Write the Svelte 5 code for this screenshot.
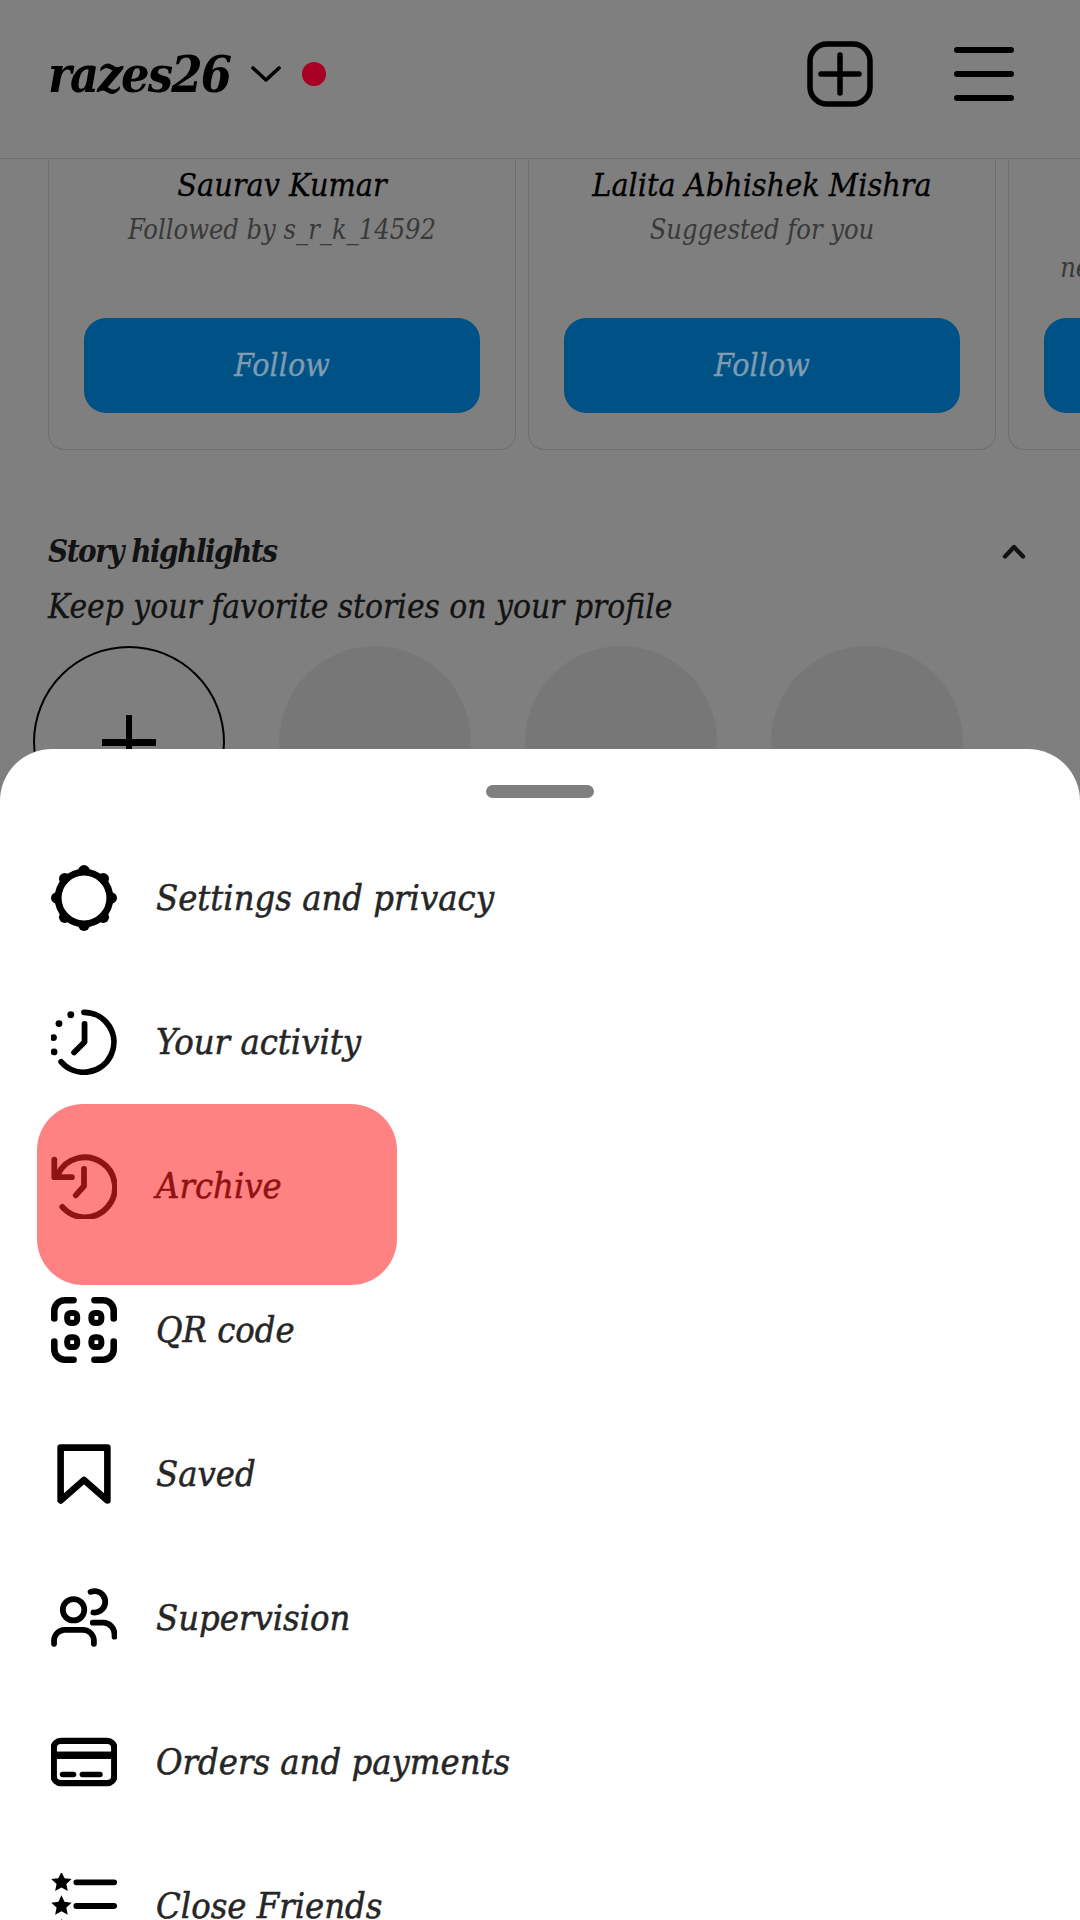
<script lang="ts">
  const cards = [
    { name: 'Saurav Kumar', note: 'Followed by s_r_k_14592' },
    { name: 'Lalita Abhishek Mishra', note: 'Suggested for you' },
    { name: 'Ankit Raj', note: 'Instagram\nnew to Instagram and nearby' }
  ]

  const menu = [
    { id: 'settings', label: 'Settings and privacy' },
    { id: 'activity', label: 'Your activity' },
    { id: 'archive', label: 'Archive' },
    { id: 'qr', label: 'QR code' },
    { id: 'saved', label: 'Saved' },
    { id: 'supervision', label: 'Supervision' },
    { id: 'orders', label: 'Orders and payments' },
    { id: 'friends', label: 'Close Friends' }
  ]

  const bumps = [0, 45, 90, 135, 180, 225, 270, 315].map((deg) => ({
    x: 12 + 9.9 * Math.cos((deg * Math.PI) / 180),
    y: 12 + 9.9 * Math.sin((deg * Math.PI) / 180)
  }))

  const star = (cx: number, cy: number, r = 3.9) => {
    const pts = []
    for (let i = 0; i < 10; i++) {
      const rad = i % 2 ? r * 0.48 : r
      const a = (i * Math.PI) / 5 - Math.PI / 2
      pts.push(`${(cx + rad * Math.cos(a)).toFixed(2)},${(cy + rad * Math.sin(a)).toFixed(2)}`)
    }
    return pts.join(' ')
  }
</script>

<div class="screen">
  <header class="topbar">
    <div class="account">
      <span class="username">razes26</span>
      <svg class="caret" viewBox="0 0 32 20" fill="none" stroke="currentColor" stroke-width="3.6" stroke-linecap="round" stroke-linejoin="round">
        <path d="M3 4 L16 16 L29 4" />
      </svg>
      <span class="dot"></span>
    </div>
    <div class="actions">
      <svg class="new-post" viewBox="0 0 66 66" fill="none" stroke="currentColor" stroke-width="5.5" stroke-linecap="round">
        <rect x="3" y="3" width="60" height="60" rx="17" />
        <path d="M33 14 V52 M14 33 H52" />
      </svg>
      <svg class="burger" viewBox="0 0 60 54" fill="none" stroke="currentColor" stroke-width="6" stroke-linecap="round">
        <path d="M3 3 H57 M3 27 H57 M3 51 H57" />
      </svg>
    </div>
  </header>

  <div class="suggestions">
    {#each cards as card}
      <div class="card">
        <div class="card-name">{card.name}</div>
        <div class="card-note">{card.note}</div>
        <div class="follow">Follow</div>
      </div>
    {/each}
  </div>

  <section class="highlights">
    <div class="hl-title">
      <span>Story highlights</span>
      <svg class="hl-caret" viewBox="0 0 24 15" fill="none" stroke="currentColor" stroke-width="4.4" stroke-linecap="round" stroke-linejoin="round">
        <path d="M3 12.5 L12 3 L21 12.5" />
      </svg>
    </div>
    <div class="hl-sub">Keep your favorite stories on your profile</div>
    <div class="circles">
      <div class="circle add"></div>
      <div class="circle"></div>
      <div class="circle"></div>
      <div class="circle"></div>
    </div>
  </section>

  <div class="scrim"></div>

  <div class="sheet">
    <div class="handle"></div>
    <ul class="menu">
      {#each menu as item}
        <li class="row" class:marked={item.id === 'archive'}>
          <svg class="icon" viewBox="0 0 24 24" fill="none" stroke="currentColor" stroke-width="2.1" stroke-linecap="round" stroke-linejoin="round">
            {#if item.id === 'settings'}
              {#each bumps as b}
                <circle cx={b.x} cy={b.y} r="2.1" fill="currentColor" stroke="none" />
              {/each}
              <circle cx="12" cy="12" r="9.4" fill="#fff" stroke-width="2.5" />
            {:else if item.id === 'activity'}
              <path d="M12 1.2 A10.9 10.9 0 1 1 3.7 19.2" />
              <path d="M12.2 5.4 V12 L8.4 15.8" />
              <g fill="currentColor" stroke="none">
                <circle cx="7.2" cy="2.1" r="1.25" />
                <circle cx="2.9" cy="5.3" r="1.25" />
                <circle cx="0.9" cy="10.4" r="1.25" />
                <circle cx="1.1" cy="15.6" r="1.25" />
              </g>
            {:else if item.id === 'archive'}
              <path d="M2.6 7.6 A10.9 10.9 0 1 1 4.1 19.6" />
              <path d="M1.2 2.4 V8.8 H7.6" />
              <path d="M12 5.8 V12 L9 15.4" />
            {:else if item.id === 'qr'}
              <path d="M1.2 7.8 V5 A3.8 3.8 0 0 1 5 1.2 H8.2" stroke-width="2.4" />
              <path d="M15.8 1.2 H19 A3.8 3.8 0 0 1 22.8 5 V7.8" stroke-width="2.4" />
              <path d="M1.2 16.2 V19 A3.8 3.8 0 0 0 5 22.8 H8.2" stroke-width="2.4" />
              <path d="M15.8 22.8 H19 A3.8 3.8 0 0 0 22.8 19 V16.2" stroke-width="2.4" />
              <g stroke-width="2.2">
                <rect x="5.9" y="5.8" width="3.6" height="3.6" rx="1.3" />
                <rect x="14.7" y="5.8" width="3.6" height="3.6" rx="1.3" />
                <rect x="5.9" y="14.6" width="3.6" height="3.6" rx="1.3" />
                <rect x="14.7" y="14.6" width="3.6" height="3.6" rx="1.3" />
              </g>
            {:else if item.id === 'saved'}
              <path d="M3.5 2.4 H20.5 V21.6 L12 14.2 L3.5 21.6 Z" stroke-width="2.4" />
            {:else if item.id === 'supervision'}
              <circle cx="8.2" cy="9" r="3.9" />
              <path d="M1.1 21.4 V20.2 A4 4 0 0 1 5 16.3 H11.6 A4 4 0 0 1 15.6 20.2 V21.4" />
              <path d="M14.4 2.5 A3.9 3.9 0 1 1 15.4 10" />
              <path d="M15.2 13.7 H19 A4.2 4.2 0 0 1 23.1 18 V18.8" />
            {:else if item.id === 'orders'}
              <rect x="1" y="4.3" width="22" height="15.4" rx="2.6" stroke-width="2.3" />
              <rect x="1" y="8.2" width="22" height="2.7" fill="currentColor" stroke="none" />
              <path d="M4.2 16.5 H8.2 M11.4 16.5 H17.8" stroke-width="2" />
            {:else if item.id === 'friends'}
              <g fill="currentColor" stroke="none">
                <polygon points={star(3.8, 3.4)} />
                <polygon points={star(3.8, 12)} />
                <polygon points={star(3.8, 20.6)} />
              </g>
              <path d="M9.2 3.4 H23 M9.2 12 H23 M9.2 20.6 H23" />
            {/if}
          </svg>
          <span class="label">{item.label}</span>
        </li>
      {/each}
    </ul>
    <div class="mark"></div>
  </div>
</div>

<style>
  :global(body) {
    margin: 0;
  }

  .screen {
    position: relative;
    width: 1080px;
    height: 1920px;
    overflow: hidden;
    background: #fff;
    color: #000;
    font-family: 'DejaVu Serif', 'Liberation Serif', serif;
    font-style: italic;
    font-stretch: condensed;
  }

  /* top bar */
  .topbar {
    display: flex;
    align-items: center;
    justify-content: space-between;
    box-sizing: border-box;
    height: 159px;
    padding: 0 66px 10px 48px;
    border-bottom: 1px solid #e0e0e0;
  }

  .account {
    display: flex;
    align-items: center;
  }

  .username {
    font-size: 50px;
    font-weight: 700;
    letter-spacing: -1.8px;
  }

  .caret {
    width: 32px;
    height: 20px;
    margin-left: 20px;
  }

  .dot {
    position: relative;
    z-index: 1;
    width: 24px;
    height: 24px;
    margin-left: 20px;
    border-radius: 50%;
    background: #a80024;
  }

  .actions {
    display: flex;
    align-items: center;
    gap: 81px;
  }

  .new-post {
    width: 66px;
    height: 66px;
  }

  .burger {
    width: 60px;
    height: 54px;
  }

  /* suggestion cards */
  .suggestions {
    display: flex;
    gap: 12px;
    padding-left: 48px;
    width: 1500px;
  }

  .card {
    box-sizing: border-box;
    width: 468px;
    height: 291px;
    flex: none;
    padding: 5px 35px 0;
    border: 1px solid #dbdbdb;
    border-top: none;
    border-radius: 0 0 16px 16px;
    text-align: center;
    display: flex;
    flex-direction: column;
  }

  .card-name {
    font-size: 32px;
    line-height: 42px;
    -webkit-text-stroke: 0.3px;
  }

  .card-note {
    height: 108px;
    margin-top: 5px;
    margin-bottom: -1px;
    font-size: 27px;
    line-height: 38px;
    color: #737373;
    white-space: pre-line;
  }

  .follow {
    position: relative;
    z-index: 1;
    height: 95px;
    border-radius: 22px;
    background: #005286;
    color: #7f9bb0;
    font-size: 32px;
    line-height: 95px;
    -webkit-text-stroke: 0.3px;
  }

  /* story highlights */
  .highlights {
    padding: 78px 0 0 33px;
  }

  .hl-title {
    display: flex;
    align-items: center;
    justify-content: space-between;
    padding: 0 54px 0 15px;
    font-size: 31px;
    font-weight: 700;
    letter-spacing: -1.5px;
    line-height: 46px;
    color: #262626;
  }

  .hl-caret {
    width: 24px;
    height: 15px;
  }

  .hl-sub {
    margin-top: 10px;
    padding-left: 15px;
    font-size: 33.2px;
    line-height: 46px;
    color: #262626;
    -webkit-text-stroke: 0.3px;
  }

  .circles {
    display: flex;
    gap: 54px;
    margin-top: 16px;
  }

  .circle {
    position: relative;
    box-sizing: border-box;
    width: 192px;
    height: 192px;
    border-radius: 50%;
    background: #efefef;
  }

  .circle.add {
    background: none;
    border: 2px solid #000;
  }

  .circle.add::before,
  .circle.add::after {
    content: '';
    position: absolute;
    background: #000;
  }

  .circle.add::before {
    left: 67px;
    top: 91px;
    width: 54px;
    height: 7px;
  }

  .circle.add::after {
    left: 91px;
    top: 67px;
    width: 6px;
    height: 54px;
  }

  .scrim {
    position: absolute;
    inset: 0;
    background: rgb(0 0 0 / 0.5);
  }

  /* bottom sheet */
  .sheet {
    position: absolute;
    z-index: 2;
    left: 0;
    right: 0;
    top: 749px;
    bottom: 0;
    overflow: hidden;
    background: #fff;
    border-radius: 52px 52px 0 0;
  }

  .handle {
    width: 108px;
    height: 13px;
    margin: 36px auto 28px;
    border-radius: 7px;
    background: #7f7f7f;
  }

  .menu {
    list-style: none;
    margin: 0;
    padding: 0;
  }

  .row {
    display: flex;
    align-items: center;
    gap: 39px;
    height: 144px;
    padding-left: 51px;
    color: #000;
  }

  .row.marked {
    color: #262626;
  }

  .icon {
    width: 66px;
    height: 66px;
    flex: none;
  }

  .label {
    margin-top: -2px;
    font-size: 36px;
    color: #262626;
    -webkit-text-stroke: 0.5px;
  }

  .mark {
    position: absolute;
    left: 37px;
    top: 355px;
    width: 360px;
    height: 181px;
    border-radius: 46px;
    background: rgb(255 0 0 / 0.49);
  }
</style>
